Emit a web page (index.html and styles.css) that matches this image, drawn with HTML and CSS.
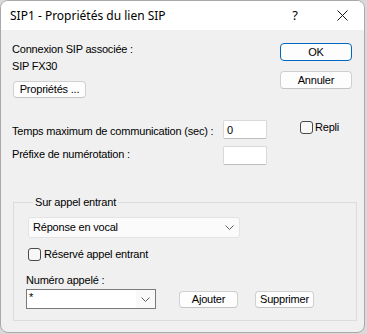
FILE: index.html
```html
<!DOCTYPE html>
<html>
<head>
	<meta charset="utf-8">
	<title>SIP1 - Propriétés du lien SIP</title>
	<link rel="stylesheet" href="styles.css">
</head>
<body>
	<div class="window">
		<div class="titlebar">
			<span class="title">SIP1 - Propriétés du lien SIP</span>
			<span class="caption_button help">?</span>
			<span class="caption_button close">
				<svg width="11" height="11" viewBox="0 0 11 11"><path d="M0.5 0.5 L10.5 10.5 M10.5 0.5 L0.5 10.5" stroke="#1a1a1a" stroke-width="1" fill="none"/></svg>
			</span>
		</div>
		<div class="content">
			<div class="top">
				<div class="conn">
					<div class="line">Connexion SIP associée :</div>
					<div class="line second">SIP FX30</div>
					<button class="btn btn_props">Propriétés ...</button>
				</div>
				<div class="actions">
					<button class="btn btn_ok">OK</button>
					<button class="btn">Annuler</button>
				</div>
			</div>

			<div class="params">
				<div class="field_row">
					<span class="field_label">Temps maximum de communication (sec) :</span>
					<input type="text" class="text_input" value="0">
					<label class="check check_repli"><span class="box"></span>Repli</label>
				</div>
				<div class="field_row second_row">
					<span class="field_label label_prefix">Préfixe de numérotation :</span>
					<input type="text" class="text_input" value="">
				</div>
			</div>

			<fieldset class="group">
				<legend>Sur appel entrant</legend>
				<div class="select">
					<span>Réponse en vocal</span>
					<svg class="chevron" width="9" height="5" viewBox="0 0 9 5"><path d="M0.5 0.5 L4.5 4.5 L8.5 0.5" stroke="#606060" fill="none"/></svg>
				</div>
				<label class="check check_reserve"><span class="box"></span>Réservé appel entrant</label>
				<div class="number_label">Numéro appelé :</div>
				<div class="number_row">
					<div class="combo">
						<span class="combo_text">*</span>
						<span class="combo_arrow">
							<svg width="9" height="5" viewBox="0 0 9 5"><path d="M0.5 0.5 L4.5 4.5 L8.5 0.5" stroke="#606060" fill="none"/></svg>
						</span>
					</div>
					<button class="btn btn_small btn_add">Ajouter</button>
					<button class="btn btn_small btn_remove">Supprimer</button>
				</div>
			</fieldset>
		</div>
	</div>
</body>
</html>
```

FILE: styles.css
```css
*
{
	box-sizing: border-box;
}
html, body
{
	margin: 0px;
	padding: 0px;
}
body
{
	background-color: #d9d9d9;
	font-family: "Liberation Sans", Arial, sans-serif;
	font-size: 11px;
	line-height: 13px;
	letter-spacing: -0.2px;
	color: #000;
}
.window
{
	width: 365px;
	height: 333px;
	background-color: #f0f0f0;
	border: 1px solid #a9a9a9;
	border-radius: 8px;
	overflow: hidden;
}
.titlebar
{
	display: flex;
	align-items: center;
	height: 29px;
	background-color: #fff;
	padding-left: 9px;
	font-family: "Noto Sans", sans-serif;
	font-size: 12px;
	letter-spacing: 0px;
}
.title
{
	flex: 1;
	padding-bottom: 1px;
}
.caption_button
{
	display: flex;
	justify-content: center;
	align-items: center;
	width: 46px;
	height: 29px;
}
.help
{
	font-size: 13px;
	padding-bottom: 1px;
}
.close
{
	padding-left: 2px;
	padding-bottom: 1px;
}
.content
{
	padding: 13px 12px 0px 11px;
}
.top
{
	display: flex;
	justify-content: space-between;
	align-items: flex-start;
}
.conn .second
{
	margin-top: 4px;
}
.btn
{
	font: inherit;
	letter-spacing: inherit;
	color: #000;
	background-color: #fdfdfd;
	border: 1px solid #d0d0d0;
	border-bottom-color: #c4c4c4;
	border-radius: 4px;
	padding: 0px;
	height: 18px;
}
.btn_props
{
	display: block;
	margin-top: 8px;
	margin-left: 1px;
	width: 73px;
	height: 17px;
}
.actions
{
	display: flex;
	flex-direction: column;
	gap: 10px;
	width: 72px;
}
.btn_ok
{
	border-color: #0067c0;
}
.params
{
	margin-top: 22px;
}
.field_row
{
	display: flex;
	align-items: flex-start;
}
.second_row
{
	margin-top: 7px;
}
.field_label
{
	width: 211px;
	padding-top: 5px;
}
.label_prefix
{
	padding-top: 2px;
}
.text_input
{
	width: 44px;
	height: 19px;
	margin: 0px;
	padding: 0px 3px;
	font: inherit;
	background-color: #fff;
	border: 1px solid #d9d9d9;
	border-bottom-color: #bdbdbd;
	border-radius: 2px;
	outline: none;
}
.check
{
	display: flex;
	align-items: center;
	gap: 2px;
}
.box
{
	width: 13px;
	height: 13px;
	border: 1px solid #4a4a4a;
	border-radius: 3px;
	background-color: #f7f7f7;
}
.check_repli
{
	margin-left: 33px;
	margin-top: 1px;
}
.group
{
	width: 344px;
	height: 125px;
	margin: 31px 0px 0px 1px;
	padding: 8px 0px 0px 12px;
	border: 1px solid #dcdcdc;
	min-inline-size: 0px;
}
.group legend
{
	margin-left: 7px;
	padding: 0px 2px;
}
.select
{
	display: flex;
	justify-content: space-between;
	align-items: center;
	width: 212px;
	height: 21px;
	margin-left: 2px;
	padding: 0px 5px 0px 4px;
	background-color: #fbfbfb;
	border: 1px solid #e3e3e3;
	border-radius: 3px;
}
.check_reserve
{
	margin-top: 10px;
	margin-left: 2px;
	gap: 3px;
}
.number_label
{
	margin-top: 13px;
}
.number_row
{
	display: flex;
	align-items: flex-start;
	margin-top: 2px;
}
.combo
{
	display: flex;
	width: 130px;
	height: 20px;
	background-color: #fff;
	border: 1px solid #7a7a7a;
}
.combo_text
{
	flex: 1;
	padding: 1px 2px;
}
.combo_arrow
{
	display: flex;
	justify-content: center;
	align-items: center;
	width: 19px;
	background-color: #f9f9f9;
}
.btn_small
{
	width: 59px;
	height: 17px;
	margin-top: 2px;
}
.btn_add
{
	margin-left: 23px;
}
.btn_remove
{
	margin-left: 17px;
}
```
